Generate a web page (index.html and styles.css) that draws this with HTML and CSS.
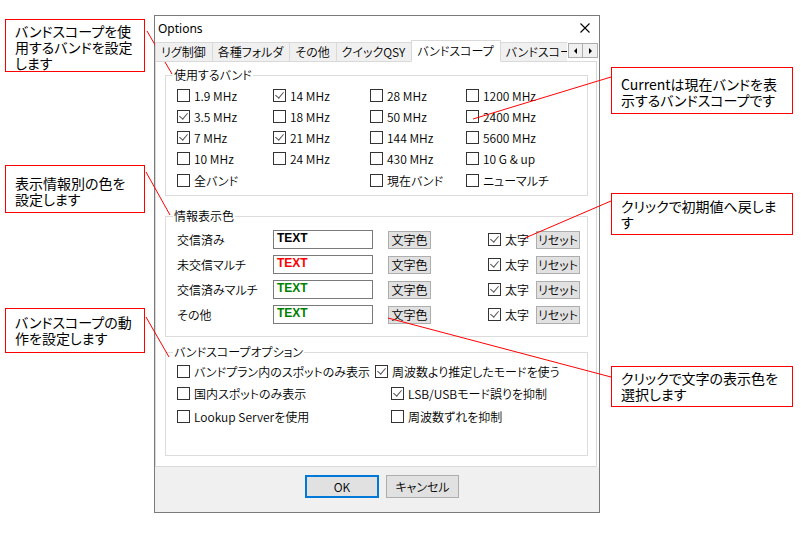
FILE: index.html
```html
<!DOCTYPE html>
<html lang="ja">
<head>
    <meta charset="UTF-8">
    <meta name="viewport" content="width=device-width, initial-scale=1.0">
    <title>Options - バンドスコープ</title>
    <link rel="stylesheet" href="styles.css">
</head>
<body>
    <div class="screen">
        <div class="dialog">
            <div class="titlebar">
                <span class="title">Options</span>
                <svg class="close" width="10" height="10" viewBox="0 0 10 10">
                    <path d="M0.5 0.5 L9.5 9.5 M9.5 0.5 L0.5 9.5" stroke="#000" stroke-width="1.1" fill="none"/>
                </svg>
            </div>

            <div class="tabs">
                <div class="tab-strip">
                    <div class="tab">リグ制御</div>
                    <div class="tab">各種フォルダ</div>
                    <div class="tab">その他</div>
                    <div class="tab">クイックQSY</div>
                    <div class="tab active">バンドスコープ</div>
                    <div class="tab">バンドスコープ表示</div>
                </div>
                <div class="tab-scroll">
                    <span class="arrow left"></span>
                    <span class="arrow right"></span>
                </div>
            </div>

            <div class="panel">
                <fieldset class="group bands">
                    <legend>使用するバンド</legend>
                    <div class="band-grid">
                        <label class="check"><span class="box"></span>1.9 MHz</label>
                        <label class="check"><span class="box on"></span>14 MHz</label>
                        <label class="check"><span class="box"></span>28 MHz</label>
                        <label class="check"><span class="box"></span>1200 MHz</label>

                        <label class="check"><span class="box on"></span>3.5 MHz</label>
                        <label class="check"><span class="box"></span>18 MHz</label>
                        <label class="check"><span class="box"></span>50 MHz</label>
                        <label class="check"><span class="box"></span>2400 MHz</label>

                        <label class="check"><span class="box on"></span>7 MHz</label>
                        <label class="check"><span class="box on"></span>21 MHz</label>
                        <label class="check"><span class="box"></span>144 MHz</label>
                        <label class="check"><span class="box"></span>5600 MHz</label>

                        <label class="check"><span class="box"></span>10 MHz</label>
                        <label class="check"><span class="box"></span>24 MHz</label>
                        <label class="check"><span class="box"></span>430 MHz</label>
                        <label class="check"><span class="box"></span>10 G &amp; up</label>

                        <label class="check last"><span class="box"></span>全バンド</label>
                        <span class="last"></span>
                        <label class="check last"><span class="box"></span>現在バンド</label>
                        <label class="check last"><span class="box"></span>ニューマルチ</label>
                    </div>
                </fieldset>

                <fieldset class="group colors">
                    <legend>情報表示色</legend>
                    <div class="color-row">
                        <span class="color-label">交信済み</span>
                        <span class="sample black">TEXT</span>
                        <button class="btn small">文字色</button>
                        <label class="check bold"><span class="box on"></span>太字</label>
                        <button class="btn small">リセット</button>
                    </div>
                    <div class="color-row">
                        <span class="color-label">未交信マルチ</span>
                        <span class="sample red">TEXT</span>
                        <button class="btn small">文字色</button>
                        <label class="check bold"><span class="box on"></span>太字</label>
                        <button class="btn small">リセット</button>
                    </div>
                    <div class="color-row">
                        <span class="color-label">交信済みマルチ</span>
                        <span class="sample green">TEXT</span>
                        <button class="btn small">文字色</button>
                        <label class="check bold"><span class="box on"></span>太字</label>
                        <button class="btn small">リセット</button>
                    </div>
                    <div class="color-row">
                        <span class="color-label">その他</span>
                        <span class="sample green">TEXT</span>
                        <button class="btn small">文字色</button>
                        <label class="check bold"><span class="box on"></span>太字</label>
                        <button class="btn small">リセット</button>
                    </div>
                </fieldset>

                <fieldset class="group options">
                    <legend>バンドスコープオプション</legend>
                    <div class="option-row first">
                        <label class="check"><span class="box"></span>バンドプラン内のスポットのみ表示</label>
                        <label class="check"><span class="box on"></span>周波数より推定したモードを使う</label>
                    </div>
                    <div class="option-row">
                        <label class="check"><span class="box"></span>国内スポットのみ表示</label>
                        <label class="check"><span class="box on"></span>LSB/USBモード誤りを抑制</label>
                    </div>
                    <div class="option-row">
                        <label class="check"><span class="box"></span>Lookup Serverを使用</label>
                        <label class="check"><span class="box"></span>周波数ずれを抑制</label>
                    </div>
                </fieldset>
            </div>

            <div class="footer">
                <button class="btn ok">OK</button>
                <button class="btn cancel">キャンセル</button>
            </div>
        </div>

        <!-- 説明の吹き出し -->
        <div class="note n1">バンドスコープを使<br>用するバンドを設定<br>します</div>
        <div class="note n2">Currentは現在バンドを表<br>示するバンドスコープです</div>
        <div class="note n3">クリックで初期値へ戻しま<br>す</div>
        <div class="note n4">クリックで文字の表示色を<br>選択します</div>
        <div class="note n5">表示情報別の色を<br>設定します</div>
        <div class="note n6">バンドスコープの動<br>作を設定します</div>

        <svg class="leaders" width="801" height="536" viewBox="0 0 801 536">
            <g stroke="#ff0000" stroke-width="1" fill="none">
                <line x1="147" y1="31" x2="172" y2="74"/>
                <line x1="611" y1="77" x2="473" y2="119"/>
                <line x1="611" y1="201" x2="525" y2="238"/>
                <line x1="388" y1="318" x2="611" y2="377"/>
                <line x1="146" y1="172" x2="170" y2="215"/>
                <line x1="146" y1="317" x2="169" y2="357"/>
            </g>
        </svg>
    </div>
</body>
</html>
```

FILE: styles.css
```css
:root {
    --ui-font: "Noto Sans CJK JP", "Noto Sans", sans-serif;
    --group-border: #dcdcdc;
    --btn-face: #e1e1e1;
    --btn-border: #adadad;
    --note-red: #ff0000;
}

body {
    margin: 0;
    background: #fff;
    font-family: var(--ui-font);
    font-feature-settings: "palt";
    color: #000;
}

.screen {
    position: relative;
    width: 801px;
    height: 536px;
    overflow: hidden;
    background: #fff;
}

/* ダイアログ本体 */
.dialog {
    position: absolute;
    left: 154px;
    top: 15px;
    width: 446px;
    height: 498px;
    box-sizing: border-box;
    border: 1px solid #7a7a7a;
    background: #fff;
    display: flex;
    flex-direction: column;
    font-size: 12px;
    font-weight: 350;
}

.titlebar {
    height: 24px;
    display: flex;
    align-items: center;
    justify-content: space-between;
    padding: 0 9px 0 3px;
}

.title {
    font-family: "Noto Sans", sans-serif;
    font-size: 12px;
    font-weight: 400;
}

.close {
    display: block;
}

.tabs {
    position: relative;
    height: 21px;
    display: flex;
    align-items: flex-end;
    z-index: 1;
}

.tab-strip {
    width: 412px;
    height: 22px;
    margin-bottom: -1px;
    display: flex;
    align-items: flex-end;
    overflow: hidden;
}

.tab {
    height: 20px;
    line-height: 18px;
    box-sizing: border-box;
    padding: 0 6px 0 5px;
    border: 1px solid #d9d9d9;
    margin-right: -1px;
    background: #f0f0f0;
    white-space: nowrap;
    flex-shrink: 0;
}

.tab.active {
    height: 22px;
    line-height: 20px;
    border-bottom-color: #fff;
    background: #fff;
    position: relative;
    z-index: 2;
}

.tab-scroll {
    position: absolute;
    right: 1px;
    top: 3px;
    display: flex;
    z-index: 3;
}

.arrow {
    width: 15px;
    height: 15px;
    box-sizing: border-box;
    border: 1px solid #adadad;
    background: #f0f0f0;
    display: flex;
    align-items: center;
    justify-content: center;
}

.arrow + .arrow {
    border-left: none;
}

.arrow::before {
    content: "";
    border-top: 3px solid transparent;
    border-bottom: 3px solid transparent;
}

.arrow.left::before {
    border-right: 3px solid #000;
}

.arrow.right::before {
    border-left: 3px solid #000;
}

.panel {
    flex: 1;
    margin-right: 2px;
    border: 1px solid #d9d9d9;
    padding: 6px 0 0 9px;
    background: #fff;
}

/* グループ枠 */
.group {
    margin: 0;
    width: 423px;
    box-sizing: border-box;
    border: 1px solid var(--group-border);
    padding: 0 0 0 11px;
    min-width: 0;
}

.group legend {
    padding: 0 1px;
    margin-left: -4px;
    line-height: 14px;
}

.bands {
    height: 128px;
    padding-top: 3px;
}

.colors {
    margin-top: 13px;
    height: 128px;
    padding-top: 4px;
}

.options {
    margin-top: 8px;
    height: 111px;
    padding-top: 1px;
}

/* チェックボックス */
.check {
    display: flex;
    align-items: center;
    white-space: nowrap;
}

.box {
    width: 13px;
    height: 13px;
    box-sizing: border-box;
    border: 1px solid #333;
    background: #fff;
    margin-right: 4px;
    position: relative;
    flex-shrink: 0;
}

.box.on::after {
    content: "";
    position: absolute;
    left: 3px;
    top: 0px;
    width: 4px;
    height: 7px;
    border-right: 1.3px solid #555;
    border-bottom: 1.3px solid #555;
    transform: rotate(40deg);
}

.band-grid {
    display: grid;
    grid-template-columns: 96px 97px 96px auto;
    grid-auto-rows: 21px;
}

.band-grid .last {
    margin-top: 2px;
}

.color-row {
    height: 25px;
    display: flex;
    align-items: center;
}

.color-label {
    width: 96px;
}

.sample {
    width: 100px;
    height: 19px;
    box-sizing: border-box;
    border: 1px solid #7a7a7a;
    padding-left: 3px;
    font-family: "Liberation Sans", sans-serif;
    font-weight: bold;
    font-size: 12px;
    line-height: 15px;
}

.sample.black { color: #000; }
.sample.red { color: #ff0000; }
.sample.green { color: #008000; }

.btn {
    font-family: var(--ui-font);
    font-feature-settings: "palt";
    font-size: 12px;
    font-weight: 350;
    color: #000;
    background: var(--btn-face);
    border: 1px solid var(--btn-border);
    padding: 0;
    margin: 0;
    box-sizing: border-box;
}

.btn.small {
    height: 18px;
    line-height: 15px;
    width: 43px;
}

.color-row .btn.small:first-of-type {
    margin-left: 15px;
}

.check.bold {
    margin-left: 57px;
    width: 48px;
}

.color-row .btn.small:last-child {
    width: 44px;
}

.option-row {
    height: 22.5px;
    display: flex;
    align-items: center;
}

.option-row .check:first-child {
    width: 214px;
}

.option-row.first .check:first-child {
    width: 198px;
}

/* 下部ボタン */
.footer {
    height: 37px;
    background: #f0f0f0;
    display: flex;
    align-items: flex-start;
    padding: 8px 0 0 150px;
    gap: 7px;
}

.footer .btn {
    height: 23px;
}

.btn.ok {
    width: 74px;
    border: 2px solid #0078d7;
}

.btn.cancel {
    width: 73px;
}

/* 注釈 */
.note {
    position: absolute;
    box-sizing: border-box;
    border: 1px solid var(--note-red);
    background: #fff;
    font-size: 14px;
    line-height: 16px;
    padding: 3px 0 0 9px;
    white-space: nowrap;
}

.n1 { left: 5px; top: 19px; width: 140px; height: 53px; }
.n2 { left: 611px; top: 67px; width: 182px; height: 47px; padding-top: 8px; }
.n3 { left: 611px; top: 193px; width: 182px; height: 42px; padding-top: 4px; }
.n4 { left: 611px; top: 366px; width: 182px; height: 41px; padding-top: 3px; }
.n5 { left: 5px; top: 165px; width: 140px; height: 48px; padding-top: 9px; }
.n6 { left: 5px; top: 308px; width: 140px; height: 45px; padding-top: 5px; }

.leaders {
    position: absolute;
    left: 0;
    top: 0;
    pointer-events: none;
}
```
